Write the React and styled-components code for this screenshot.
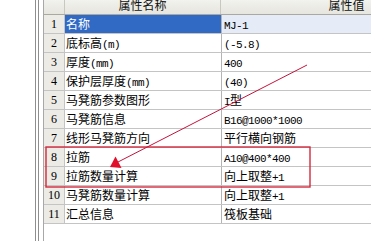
import styled, { createGlobalStyle } from 'styled-components'

const cjk = '"Noto Sans CJK SC", "Noto Sans", sans-serif'

const GlobalStyle = createGlobalStyle`
  html, body {
    margin: 0;
    padding: 0;
    background: #fff;
  }
  body {
    font-family: ${cjk};
    font-size: 12px;
    color: #000;
  }
`

const Page = styled.div`
  position: relative;
  display: flex;
  width: 371px;
  height: 241px;
  overflow: hidden;
  background: #fff;
`

const Gutter = styled.div`
  width: 35px;
  flex: none;
`

const Splitter = styled.div`
  width: 2px;
  flex: none;
  border-left: 1px solid #8e8e8e;
  border-right: 1px solid #8e8e8e;
  margin-right: 4px;
`

const Grid = styled.div`
  display: flex;
  flex-direction: column;
  flex: none;
  border-left: 1px solid #a8a8a8;
  height: 241px;
`

const Row = styled.div`
  display: flex;
  height: 18px;
  border-bottom: 1px solid #c4c4c4;
`

const HeaderRow = styled(Row)`
  height: 14px;
  border-bottom: 1px solid #a9a9a2;
  background: linear-gradient(#f2f2ee, #e6e5de);
`

const HeaderCell = styled.div`
  width: ${p => p.$w}px;
  flex: none;
  display: flex;
  align-items: flex-end;
  justify-content: center;
  padding-bottom: 3px;
  box-sizing: border-box;
  line-height: 12px;
  font-size: 12px;
  color: #111;
  border-right: 1px solid #c9c8c0;
  overflow: hidden;
`

const NumCell = styled.div`
  width: 20px;
  flex: none;
  border-right: 1px solid #c4c4c4;
  background: #ecebe6;
  font-family: "Liberation Serif", serif;
  font-size: 12px;
  line-height: 18px;
  text-align: center;
`

const NameCell = styled.div`
  width: 155px;
  flex: none;
  padding-left: 1px;
  border-right: 1px solid #b4b4b4;
  line-height: 18px;
  white-space: nowrap;
  overflow: hidden;
  background: ${p => (p.$selected ? '#316ac5' : '#fff')};
  color: ${p => (p.$selected ? '#fff' : '#000')};
`

const ValueCell = styled.div`
  width: 250px;
  flex: none;
  padding-left: 2px;
  line-height: 18px;
  white-space: nowrap;
  overflow: hidden;
  background: ${p => (p.$selected ? '#e6ecf7' : '#fff')};
`

const Latin = styled.span`
  font-family: "Liberation Mono", monospace;
  font-size: 11px;
  letter-spacing: -0.6px;
`

const Overlay = styled.svg`
  position: absolute;
  left: 0;
  top: 0;
  pointer-events: none;
`

const rows = [
  ['名称', 'MJ-1'],
  ['底标高(m)', '(-5.8)'],
  ['厚度(mm)', '400'],
  ['保护层厚度(mm)', '(40)'],
  ['马凳筋参数图形', 'I型'],
  ['马凳筋信息', 'B16@1000*1000'],
  ['线形马凳筋方向', '平行横向钢筋'],
  ['拉筋', 'A10@400*400'],
  ['拉筋数量计算', '向上取整+1'],
  ['马凳筋数量计算', '向上取整+1'],
  ['汇总信息', '筏板基础'],
]

// ascii runs get the narrow latin font, cjk stays 12px
function mixed(text) {
  return text.split(/([\x00-\x7f]+)/).filter(Boolean).map((part, i) =>
    /^[\x00-\x7f]+$/.test(part) ? <Latin key={i}>{part}</Latin> : <span key={i}>{part}</span>
  )
}

export default function App() {
  return (
    <>
      <GlobalStyle />
      <Page>
        <Gutter />
        <Splitter />
        <Grid>
          <HeaderRow>
            <HeaderCell $w={21} />
            <HeaderCell $w={156}>属性名称</HeaderCell>
            <HeaderCell $w={252}>属性值</HeaderCell>
          </HeaderRow>
          {rows.map(([name, value], i) => (
            <Row key={i}>
              <NumCell>{i + 1}</NumCell>
              <NameCell $selected={i === 0}>{mixed(name)}</NameCell>
              <ValueCell $selected={i === 0}>{mixed(value)}</ValueCell>
            </Row>
          ))}
        </Grid>

        <Overlay width="371" height="241" viewBox="0 0 371 241">
          <rect x="46" y="147" width="264" height="40" fill="none" stroke="#d4283c" strokeWidth="1.4" />
          <line x1="307" y1="65" x2="118" y2="162" stroke="#c4143c" strokeWidth="1" />
          <polygon points="110,167 115.5,156.5 121.5,168" fill="#e0102c" />
        </Overlay>
      </Page>
    </>
  )
}
